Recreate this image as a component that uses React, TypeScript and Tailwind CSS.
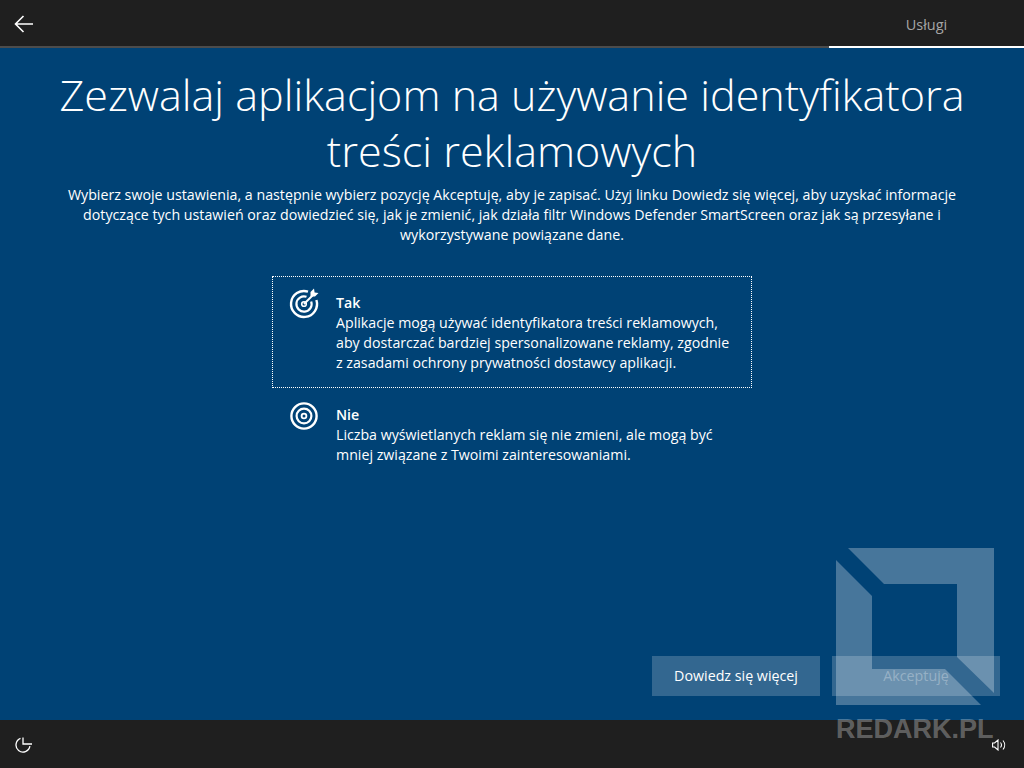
const font = { fontFamily: '"Open Sans", "Noto Sans", sans-serif' };

function BackArrow() {
  return (
    <svg width="20" height="18" viewBox="0 0 20 18" fill="none" stroke="white" strokeWidth="1.6">
      <path d="M1.5 9H19M9.5 1L1.5 9l8 8" />
    </svg>
  );
}

function TargetArrowIcon() {
  return (
    <svg width="32" height="32" viewBox="0 0 32 32" fill="none" stroke="white" className="-mt-[5px] shrink-0">
      <path strokeWidth="2.4" d="M20 3.6A13 13 0 1 0 28.4 12" />
      <path strokeWidth="2.2" d="M18.5 8.8A7.6 7.6 0 1 0 23.2 13.5" />
      <circle cx="16" cy="16" r="2.3" strokeWidth="1.6" />
      <path strokeWidth="2" d="M16 16L25 7" />
      <path fill="white" stroke="none" d="M22.5 8.5V4l3.5-3.5.6 3.9 3.9.6L27 8.5z" />
    </svg>
  );
}

function TargetIcon() {
  return (
    <svg width="32" height="32" viewBox="0 0 32 32" fill="none" stroke="white" className="-mt-[5px] shrink-0">
      <circle cx="16" cy="16" r="12.6" strokeWidth="2.4" />
      <circle cx="16" cy="16" r="7.4" strokeWidth="2.2" />
      <circle cx="16" cy="16" r="2.4" strokeWidth="1.8" />
    </svg>
  );
}

function EaseIcon() {
  return (
    <svg width="18" height="18" viewBox="0 0 18 18" fill="none" stroke="white" strokeWidth="1.3">
      <path d="M5.5 2.46A7 7 0 1 0 14.9 10.2" />
      <path d="M8 1.5V8H17" />
    </svg>
  );
}

function VolumeIcon() {
  return (
    <svg width="14" height="12" viewBox="0 0 14 12" fill="none" stroke="white" strokeWidth="1.1">
      <path d="M.6 4h2L6 1v10L2.6 8h-2z" />
      <path d="M8.5 3.5a4 4 0 0 1 0 5M11 1.5a7 7 0 0 1 0 9" />
    </svg>
  );
}

function Watermark() {
  return (
    <div className="pointer-events-none absolute left-[836px] top-[548px] flex w-[160px] flex-col">
      <svg width="160" height="158" viewBox="836 548 160 158" fill="white" fillOpacity="0.28">
        <path d="M848 548H994V693L957 657V584H884z" />
        <path d="M836 560L872 596V669H945L981 705H836z" />
      </svg>
      <span
        className="mt-[9px] text-[27px] leading-[28px] font-bold whitespace-nowrap text-white/30"
        style={{ fontFamily: '"Liberation Sans", sans-serif' }}
      >
        REDARK.PL
      </span>
    </div>
  );
}

type OptionProps = {
  icon: React.ReactNode;
  title: string;
  lines: string[];
  selected?: boolean;
};

function Option({ icon, title, lines, selected }: OptionProps) {
  return (
    <div
      className={`flex w-[480px] gap-4 border border-dotted pt-4 pr-4 pb-[14px] pl-[15px] ${
        selected ? "border-white" : "border-transparent"
      }`}
    >
      {icon}
      <div className="text-[14.2px] leading-5 text-white">
        <div className="font-semibold">{title}</div>
        {lines.map((line) => (
          <div key={line} className="whitespace-nowrap">
            {line}
          </div>
        ))}
      </div>
    </div>
  );
}

export default function App() {
  return (
    <div className="relative flex h-[768px] w-[1024px] flex-col overflow-hidden bg-[#004275]" style={font}>
      {/* Top bar */}
      <div className="flex h-[48px] shrink-0 border-b-2 border-[#4c4c4c] bg-[#1f1f1f]">
        <div className="flex flex-1 items-center pt-[2px] pl-[14px]">
          <BackArrow />
        </div>
        <div className="-mb-[2px] flex w-[195px] items-center justify-center border-b-2 border-white pt-[3px] text-[14.5px] text-[#a6a6a6]">
          Usługi
        </div>
      </div>

      {/* Content */}
      <div className="flex flex-1 flex-col items-center">
        <h1 className="mt-[19px] text-center text-[43.1px] leading-[56px] font-light whitespace-nowrap text-white">
          Zezwalaj aplikacjom na używanie identyfikatora
          <br />
          treści reklamowych
        </h1>
        <p className="mt-[6px] text-center text-[14.22px] leading-5 whitespace-nowrap text-white">
          Wybierz swoje ustawienia, a następnie wybierz pozycję Akceptuję, aby je zapisać. Użyj linku Dowiedz się więcej, aby uzyskać informacje
          <br />
          dotyczące tych ustawień oraz dowiedzieć się, jak je zmienić, jak działa filtr Windows Defender SmartScreen oraz jak są przesyłane i
          <br />
          wykorzystywane powiązane dane.
        </p>

        <div className="mt-[31px] flex flex-col">
          <Option
            selected
            icon={<TargetArrowIcon />}
            title="Tak"
            lines={[
              "Aplikacje mogą używać identyfikatora treści reklamowych,",
              "aby dostarczać bardziej spersonalizowane reklamy, zgodnie",
              "z zasadami ochrony prywatności dostawcy aplikacji.",
            ]}
          />
          <Option
            icon={<TargetIcon />}
            title="Nie"
            lines={[
              "Liczba wyświetlanych reklam się nie zmieni, ale mogą być",
              "mniej związane z Twoimi zainteresowaniami.",
            ]}
          />
        </div>

        <div className="mt-auto mb-6 flex gap-3 self-end pr-6">
          <button className="h-10 w-[168px] bg-white/20 text-[14.25px] text-white">Dowiedz się więcej</button>
          <button className="h-10 w-[168px] bg-white/20 text-[14.25px] text-white/30">Akceptuję</button>
        </div>
      </div>

      {/* Bottom bar */}
      <div className="flex h-12 shrink-0 items-center justify-between bg-[#1f1f1f] pt-[2px] pr-[18px] pl-[15px]">
        <EaseIcon />
        <VolumeIcon />
      </div>

      <Watermark />
    </div>
  );
}
